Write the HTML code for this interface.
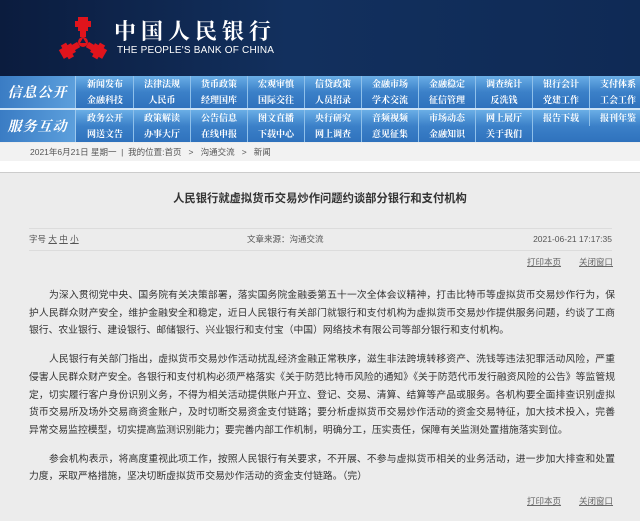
<!DOCTYPE html>
<html><head><meta charset="utf-8"><style>
*{margin:0;padding:0;box-sizing:border-box}
body{width:640px;height:521px;overflow:hidden;background:#ececec;font-family:"Liberation Sans","Noto Sans CJK SC",sans-serif;position:relative}
.hd{position:absolute;left:0;top:0;width:640px;height:76px;background:linear-gradient(90deg,#0b1c3e 0%,#12305e 45%,#0f2a55 100%)}
.cn{position:absolute;left:114px;top:18px;color:#fff;font-family:"Noto Serif CJK SC",serif;font-size:22px;font-weight:bold;letter-spacing:5px;line-height:26px}
.en{position:absolute;left:117px;top:45px;color:#fff;font-size:10px;line-height:11px;letter-spacing:0.2px}
.nav{position:absolute;left:0;width:640px;height:32px;background:linear-gradient(#6aaee6,#3b80c8 50%,#2f72bd)}
.lab{position:absolute;left:0;top:0;width:76px;height:32px;background:linear-gradient(90deg,#3a7cc4,#5c9fdc);color:#fff;font-family:"Noto Serif CJK SC",serif;font-style:italic;font-weight:bold;font-size:14px;line-height:32px;text-align:center;letter-spacing:1px;border-right:1px solid #9cc8ee}
.it{position:absolute;width:57px;height:16px;color:#fff;font-size:9px;font-weight:bold;text-align:center;line-height:16px;border-right:1px solid #8fc0ea;font-family:"Noto Serif CJK SC",serif}
.bc{position:absolute;left:0;top:143px;width:640px;height:18px;background:#f2f2f2;font-size:8.5px;color:#555;line-height:18px;padding-left:30px}
.wh{position:absolute;left:0;top:161px;width:640px;height:12px;background:#fff;border-bottom:1px solid #ccc}
.title{position:absolute;left:0;top:191px;width:640px;text-align:center;font-size:11.3px;font-weight:bold;color:#333;line-height:16px}
.meta{position:absolute;left:29px;width:583px;top:228px;height:23px;border-top:1px solid #dcdcdc;border-bottom:1px solid #dcdcdc;font-size:8.5px;color:#555;line-height:21px}
.lnk{position:absolute;font-size:8.5px;color:#666;text-decoration:underline}
.body{position:absolute;left:29px;top:287px;width:586px;font-size:9.8px;line-height:17.7px;color:#333;text-align:justify}
.body p{text-indent:20px;margin-bottom:11px}
</style></head><body>
<div class="hd">
<svg style="position:absolute;left:58px;top:15px" width="50" height="46" viewBox="0 0 50 46">
<g fill="#e0141c">
<g id="a"><path d="M20 2h10v4h3v6h-3v4h-2v6h-6v-6h-2v-4h-3v-6h3z"/></g>
<use href="#a" transform="rotate(120 25 27)"/>
<use href="#a" transform="rotate(240 25 27)"/>
<circle cx="25" cy="27" r="5"/>
</g>
<path d="M25 23l3 5h-6z" fill="#0d2148"/>
</svg>
<div class="cn">中国人民银行</div>
<div class="en">THE PEOPLE'S BANK OF CHINA</div>
</div>

<div class="nav" style="top:76px"><div class="lab">信息公开</div>
<div class="it" style="left:77px;top:0">新闻发布</div><div class="it" style="left:134px;top:0">法律法规</div><div class="it" style="left:191px;top:0">货币政策</div><div class="it" style="left:248px;top:0">宏观审慎</div><div class="it" style="left:305px;top:0">信贷政策</div><div class="it" style="left:362px;top:0">金融市场</div><div class="it" style="left:419px;top:0">金融稳定</div><div class="it" style="left:476px;top:0">调查统计</div><div class="it" style="left:533px;top:0">银行会计</div><div class="it" style="left:590px;top:0">支付体系</div>
<div class="it" style="left:77px;top:16px">金融科技</div><div class="it" style="left:134px;top:16px">人民币</div><div class="it" style="left:191px;top:16px">经理国库</div><div class="it" style="left:248px;top:16px">国际交往</div><div class="it" style="left:305px;top:16px">人员招录</div><div class="it" style="left:362px;top:16px">学术交流</div><div class="it" style="left:419px;top:16px">征信管理</div><div class="it" style="left:476px;top:16px">反洗钱</div><div class="it" style="left:533px;top:16px">党建工作</div><div class="it" style="left:590px;top:16px">工会工作</div>
</div>
<div style="position:absolute;left:0;top:108px;width:640px;height:2px;background:#cfe4f6"></div>
<div class="nav" style="top:110px"><div class="lab">服务互动</div>
<div class="it" style="left:77px;top:0">政务公开</div><div class="it" style="left:134px;top:0">政策解读</div><div class="it" style="left:191px;top:0">公告信息</div><div class="it" style="left:248px;top:0">图文直播</div><div class="it" style="left:305px;top:0">央行研究</div><div class="it" style="left:362px;top:0">音频视频</div><div class="it" style="left:419px;top:0">市场动态</div><div class="it" style="left:476px;top:0">网上展厅</div><div class="it" style="left:533px;top:0">报告下载</div><div class="it" style="left:590px;top:0">报刊年鉴</div>
<div class="it" style="left:77px;top:16px">网送文告</div><div class="it" style="left:134px;top:16px">办事大厅</div><div class="it" style="left:191px;top:16px">在线申报</div><div class="it" style="left:248px;top:16px">下载中心</div><div class="it" style="left:305px;top:16px">网上调查</div><div class="it" style="left:362px;top:16px">意见征集</div><div class="it" style="left:419px;top:16px">金融知识</div><div class="it" style="left:476px;top:16px">关于我们</div>
</div>

<div class="bc">2021年6月21日 星期一 &nbsp;|&nbsp; 我的位置:首页 &nbsp;&nbsp;&gt;&nbsp;&nbsp; 沟通交流 &nbsp;&nbsp;&gt;&nbsp;&nbsp; 新闻</div>
<div class="wh"></div>

<div class="title">人民银行就虚拟货币交易炒作问题约谈部分银行和支付机构</div>
<div class="meta"><span>字号 <u>大</u> <u>中</u> <u>小</u></span><span style="position:absolute;left:218px">文章来源：沟通交流</span><span style="position:absolute;right:0">2021-06-21 17:17:35</span></div>
<div class="lnk" style="left:527px;top:256px">打印本页</div><div class="lnk" style="left:579px;top:256px">关闭窗口</div>

<div class="body">
<p>为深入贯彻党中央、国务院有关决策部署，落实国务院金融委第五十一次全体会议精神，打击比特币等虚拟货币交易炒作行为，保护人民群众财产安全，维护金融安全和稳定，近日人民银行有关部门就银行和支付机构为虚拟货币交易炒作提供服务问题，约谈了工商银行、农业银行、建设银行、邮储银行、兴业银行和支付宝（中国）网络技术有限公司等部分银行和支付机构。</p>
<p>人民银行有关部门指出，虚拟货币交易炒作活动扰乱经济金融正常秩序，滋生非法跨境转移资产、洗钱等违法犯罪活动风险，严重侵害人民群众财产安全。各银行和支付机构必须严格落实《关于防范比特币风险的通知》《关于防范代币发行融资风险的公告》等监管规定，切实履行客户身份识别义务，不得为相关活动提供账户开立、登记、交易、清算、结算等产品或服务。各机构要全面排查识别虚拟货币交易所及场外交易商资金账户，及时切断交易资金支付链路；要分析虚拟货币交易炒作活动的资金交易特征，加大技术投入，完善异常交易监控模型，切实提高监测识别能力；要完善内部工作机制，明确分工，压实责任，保障有关监测处置措施落实到位。</p>
<p>参会机构表示，将高度重视此项工作，按照人民银行有关要求，不开展、不参与虚拟货币相关的业务活动，进一步加大排查和处置力度，采取严格措施，坚决切断虚拟货币交易炒作活动的资金支付链路。（完）</p>
</div>
<div class="lnk" style="left:527px;top:495px">打印本页</div><div class="lnk" style="left:579px;top:495px">关闭窗口</div>
</body></html>
